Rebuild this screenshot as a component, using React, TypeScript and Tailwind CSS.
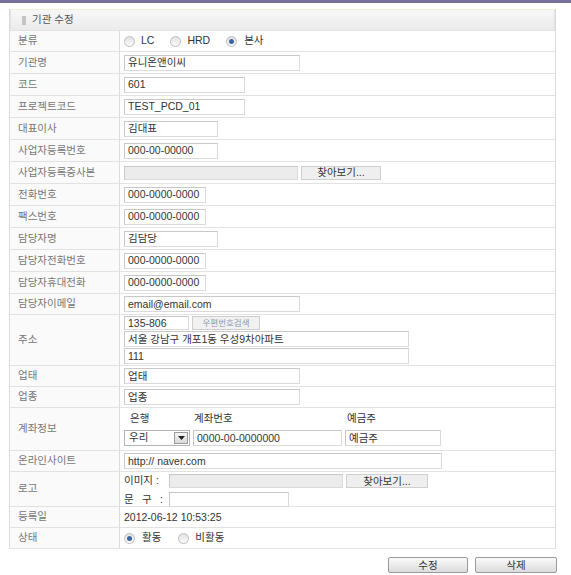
import React from 'react'

const font = { fontFamily: '"Liberation Sans", "Noto Sans CJK KR", sans-serif' }

function Box({ w, children, gray, h = 'h-[16px]' }: { w: string; children?: React.ReactNode; gray?: boolean; h?: string }) {
  return (
    <div
      className={`${w} ${h} flex items-center border border-[#dadada] border-t-[#c8c8c8] border-l-[#c8c8c8] pl-[3px] text-[10.5px] leading-none text-[#333] ${
        gray ? 'bg-[#ececec]' : 'bg-white'
      }`}
    >
      {children}
    </div>
  )
}

function Browse({ w }: { w: string }) {
  return (
    <div
      className={`${w} flex h-[14px] items-center justify-center border border-[#cfcfcf] bg-[#efefef] text-[10.5px] leading-none text-[#333]`}
    >
      찾아보기...
    </div>
  )
}

function Radio({ checked }: { checked?: boolean }) {
  return (
    <span className="flex h-[11px] w-[11px] items-center justify-center rounded-full border border-[#bdbdbd] bg-gradient-to-b from-[#e2e2e2] to-[#fafafa]">
      {checked ? <span className="h-[5px] w-[5px] rounded-full bg-[#3b67a6]" /> : null}
    </span>
  )
}

function Row({ label, h, children, align = 'items-center' }: { label: string; h: string; children?: React.ReactNode; align?: string }) {
  return (
    <div className={`flex ${h} border-b border-[#e2e2e2]`}>
      <div className="flex w-[110px] shrink-0 items-center border-r border-[#dcdcdc] bg-[#fafafa] pl-[8px] text-[10.5px] text-[#777]">
        {label}
      </div>
      <div className={`flex flex-1 ${align} pl-[4px] text-[10.5px] text-[#333]`}>{children}</div>
    </div>
  )
}

export default function App() {
  return (
    <div className="min-h-screen w-[571px] bg-white" style={font}>
      <div className="h-[3px] bg-[#77719a]" />
      <div className="ml-[9px] mt-[6px] w-[547px] border-x border-[#dcdcdc]">
        <div className="flex h-[22px] items-center gap-[6px] border border-[#e2e2e2] border-t-[#f3f0d8] bg-gradient-to-b from-[#f7f7f7] to-[#ebebeb] pl-[11px] text-[10.5px] text-[#555]">
          <span className="h-[9px] w-[4px] bg-[#c4c4c4]" />
          기관 수정
        </div>

        <Row label="분류" h="h-[21px]">
          <div className="flex items-center">
            <Radio />
            <span className="ml-[6px] mr-[16px]">LC</span>
            <Radio />
            <span className="ml-[6px] mr-[16px]">HRD</span>
            <Radio checked />
            <span className="ml-[7px]">본사</span>
          </div>
        </Row>
        <Row label="기관명" h="h-[22px]">
          <Box w="w-[176px]">유니온앤이씨</Box>
        </Row>
        <Row label="코드" h="h-[22px]">
          <Box w="w-[121px]">601</Box>
        </Row>
        <Row label="프로젝트코드" h="h-[22px]">
          <Box w="w-[121px]">TEST_PCD_01</Box>
        </Row>
        <Row label="대표이사" h="h-[22px]">
          <Box w="w-[94px]">김대표</Box>
        </Row>
        <Row label="사업자등록번호" h="h-[22px]">
          <Box w="w-[94px]">000-00-00000</Box>
        </Row>
        <Row label="사업자등록증사본" h="h-[22px]">
          <div className="flex items-center gap-[3px]">
            <Box w="w-[174px]" h="h-[14px]" gray />
            <Browse w="w-[80px]" />
          </div>
        </Row>
        <Row label="전화번호" h="h-[22px]">
          <Box w="w-[82px]">000-0000-0000</Box>
        </Row>
        <Row label="팩스번호" h="h-[22px]">
          <Box w="w-[82px]">000-0000-0000</Box>
        </Row>
        <Row label="담당자명" h="h-[22px]">
          <Box w="w-[94px]">김담당</Box>
        </Row>
        <Row label="담당자전화번호" h="h-[22px]">
          <Box w="w-[82px]">000-0000-0000</Box>
        </Row>
        <Row label="담당자휴대전화" h="h-[22px]">
          <Box w="w-[82px]">000-0000-0000</Box>
        </Row>
        <Row label="담당자이메일" h="h-[21px]">
          <Box w="w-[176px]">email@email.com</Box>
        </Row>
        <Row label="주소" h="h-[51px]" align="items-start">
          <div className="flex flex-col gap-[1px] pt-[1px]">
            <div className="flex items-center gap-[3px]">
              <Box w="w-[65px]" h="h-[14px]">135-806</Box>
              <div className="flex h-[14px] w-[68px] items-center justify-center border border-[#cdcdcd] bg-[#f1f1f1] text-[8.5px] leading-none text-[#8a9bb0]">
                우편번호검색
              </div>
            </div>
            <Box w="w-[285px]">서울 강남구 개포1동 우성9차아파트</Box>
            <Box w="w-[285px]">111</Box>
          </div>
        </Row>
        <Row label="업태" h="h-[21px]">
          <Box w="w-[176px]">업태</Box>
        </Row>
        <Row label="업종" h="h-[21px]">
          <Box w="w-[176px]">업종</Box>
        </Row>
        <Row label="계좌정보" h="h-[43px]" align="items-start">
          <div className="flex flex-col pt-[4px]">
            <div className="flex h-[14px] items-center">
              <span className="ml-[6px] w-[64px]">은행</span>
              <span className="w-[153px]">계좌번호</span>
              <span>예금주</span>
            </div>
            <div className="mt-[4px] flex items-center gap-[3px]">
              <div className="flex h-[16px] w-[66px] items-center border border-[#b5b5b5] bg-white pl-[4px] text-[10.5px] text-[#333]">
                <span className="flex-1">우리</span>
                <span className="mr-[1px] flex h-[12px] w-[14px] items-center justify-center border border-[#9c9c9c] bg-gradient-to-b from-[#f6f6f6] to-[#dadada]">
                  <svg width="7" height="4" viewBox="0 0 7 4">
                    <path d="M0 0h7L3.5 4z" fill="#222" />
                  </svg>
                </span>
              </div>
              <Box w="w-[149px]">0000-00-0000000</Box>
              <Box w="w-[96px]">예금주</Box>
            </div>
          </div>
        </Row>
        <Row label="온라인사이트" h="h-[21px]">
          <Box w="w-[318px]">http:// naver.com</Box>
        </Row>
        <Row label="로고" h="h-[35px]" align="items-start">
          <div className="flex flex-col gap-[3px] pt-[1px]">
            <div className="flex items-center">
              <span className="w-[45px]">이미지 :</span>
              <Box w="w-[174px]" h="h-[14px]" gray />
              <div className="ml-[3px]">
                <Browse w="w-[82px]" />
              </div>
            </div>
            <div className="flex items-center">
              <span className="flex w-[45px]">
                <span className="w-[18px]">문</span>
                <span className="w-[18px]">구</span>:
              </span>
              <Box w="w-[120px]" h="h-[15px]" />
            </div>
          </div>
        </Row>
        <Row label="등록일" h="h-[21px]">
          <span className="pt-[1px]">2012-06-12 10:53:25</span>
        </Row>
        <Row label="상태" h="h-[21px]">
          <div className="flex items-center">
            <Radio checked />
            <span className="ml-[7px] mr-[17px]">활동</span>
            <Radio />
            <span className="ml-[6px]">비활동</span>
          </div>
        </Row>
      </div>
      <div className="mt-[8px] flex w-[557px] justify-end gap-[7px]">
        <button className="flex h-[16px] w-[80px] items-center justify-center rounded-[2px] border border-[#9a9a9a] bg-gradient-to-b from-[#fafafa] to-[#dcdcdc] text-[10.5px] leading-none text-[#333]">
          수정
        </button>
        <button className="flex h-[16px] w-[82px] items-center justify-center rounded-[2px] border border-[#9a9a9a] bg-gradient-to-b from-[#fafafa] to-[#dcdcdc] text-[10.5px] leading-none text-[#333]">
          삭제
        </button>
      </div>
    </div>
  )
}
